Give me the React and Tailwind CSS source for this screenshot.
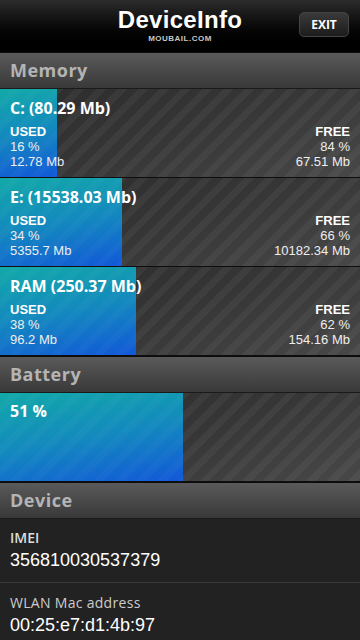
import React from 'react';

const stripes =
  'bg-[image:repeating-linear-gradient(135deg,rgba(255,255,255,0)_0px,rgba(255,255,255,0)_8px,rgba(255,255,255,0.045)_8px,rgba(255,255,255,0.045)_15px),linear-gradient(160deg,#2c2c2c_0%,#363636_50%,#484848_100%)]';

const barFill =
  'bg-[image:repeating-linear-gradient(135deg,rgba(255,255,255,0)_0px,rgba(255,255,255,0)_8px,rgba(255,255,255,0.025)_8px,rgba(255,255,255,0.025)_15px),linear-gradient(170deg,#12a9a8_0%,#1389be_50%,#1258d8_100%)]';

const memory = [
  { name: 'C: (80.29 Mb)', pct: 16, usedMb: '12.78 Mb', free: 84, freeMb: '67.51 Mb', w: 57 },
  { name: 'E: (15538.03 Mb)', pct: 34, usedMb: '5355.7 Mb', free: 66, freeMb: '10182.34 Mb', w: 122 },
  { name: 'RAM (250.37 Mb)', pct: 38, usedMb: '96.2 Mb', free: 62, freeMb: '154.16 Mb', w: 136 },
];

const SectionHeader = ({ title }) => (
  <div className="h-[37px] flex items-center px-[10px] bg-gradient-to-b from-[#5a5a5a] to-[#393939] border-t border-[#0c0c0c] border-b border-b-[#1a1a1a]">
    <span className="text-[18px] font-bold text-[#b4b4b4] tracking-[0.5px]">{title}</span>
  </div>
);

const MemoryRow = ({ item }) => (
  <div className={`relative h-[89px] border-b border-[#0e0e0e] ${stripes}`}>
    <div className={`absolute left-0 top-0 bottom-0 ${barFill}`} style={{ width: item.w }} />
    <div className="relative px-[10px] pt-[9px] text-white">
      <div className="text-[16px] font-bold leading-[20px]">{item.name}</div>
      <div className="flex justify-between mt-[6px] text-[13px] leading-[15px] font-['Liberation_Sans',sans-serif]">
        <div>
          <div className="font-bold">USED</div>
          <div className="text-[#eeeeee]">{item.pct} %</div>
          <div className="text-[#eeeeee]">{item.usedMb}</div>
        </div>
        <div className="text-right">
          <div className="font-bold">FREE</div>
          <div className="text-[#eeeeee]">{item.free} %</div>
          <div className="text-[#eeeeee]">{item.freeMb}</div>
        </div>
      </div>
    </div>
  </div>
);

export default function App() {
  return (
    <div className="w-[360px] h-[640px] overflow-hidden bg-[#222222] font-['Open_Sans',sans-serif]">
      <div className="relative h-[52px] bg-gradient-to-b from-[#2c2c2c] via-[#0a0a0a] to-black flex flex-col items-center">
        <div className="text-[24px] font-bold text-white leading-[28px] mt-[6px] font-['Liberation_Sans',sans-serif] tracking-[0.3px]">
          DeviceInfo
        </div>
        <div className="text-[8px] font-bold text-[#c8c8c8] leading-[10px] tracking-[0.5px] font-['Liberation_Sans',sans-serif]">
          MOUBAIL.COM
        </div>
        <button className="absolute right-[11px] top-[12px] w-[50px] h-[25px] rounded-[5px] bg-gradient-to-b from-[#3a3a3a] to-[#1c1c1c] border border-[#444] text-white text-[12px] font-bold">
          EXIT
        </button>
      </div>

      <SectionHeader title="Memory" />
      {memory.map((m) => (
        <MemoryRow key={m.name} item={m} />
      ))}

      <SectionHeader title="Battery" />
      <div className={`relative h-[89px] border-b border-[#0e0e0e] ${stripes}`}>
        <div className={`absolute left-0 top-0 bottom-0 ${barFill}`} style={{ width: 183 }} />
        <div className="relative px-[10px] pt-[8px] text-white text-[16px] font-bold leading-[20px]">51 %</div>
      </div>

      <SectionHeader title="Device" />
      <div className="bg-[#222222]">
        <div className="h-[64px] px-[10px] pt-[9px] border-b border-[#3a3a3a]">
          <div className="text-[14px] font-semibold text-[#dddddd] leading-[19px]">IMEI</div>
          <div className="mt-[2px] text-[18px] text-white leading-[22px] font-['Liberation_Sans',sans-serif]">356810030537379</div>
        </div>
        <div className="px-[10px] pt-[10px]">
          <div className="text-[14px] text-[#cccccc] leading-[19px] tracking-[0.3px]">WLAN Mac address</div>
          <div className="mt-[2px] text-[18px] text-white leading-[22px] font-['Liberation_Sans',sans-serif]">00:25:e7:d1:4b:97</div>
        </div>
      </div>
    </div>
  );
}
